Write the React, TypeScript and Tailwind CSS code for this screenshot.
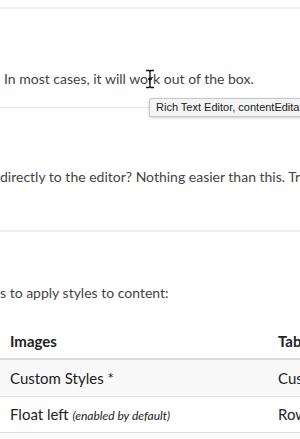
export default function App() {
  const font = { fontFamily: 'Lato, "Noto Sans", sans-serif' };
  return (
    <div className="relative h-[439px] w-[300px] overflow-hidden bg-white text-[#444]" style={font}>
      <div className="h-[7px]" />
      <div className="h-[2px] bg-[#efefef]" />

      <section className="h-[98px] whitespace-nowrap">
        <p className="pt-[58px] pl-[4px] text-[14px] leading-[24px]">
          In most cases, it will work out of the box.
        </p>
      </section>
      <div className="h-px bg-[#e6e6e6]" />

      <section className="h-[122px] whitespace-nowrap">
        <p className="pt-[57px] text-[14px] leading-[24px]">
          directly to the editor? Nothing easier than this. Try it yourself.
        </p>
      </section>
      <div className="h-[2px] bg-[#efefef]" />

      <section className="whitespace-nowrap">
        <p className="pt-[49px] text-[14px] leading-[24px]">s to apply styles to content:</p>
      </section>

      <table className="mt-[19px] w-[420px] table-fixed border-collapse text-left text-[15px] text-[#222]">
        <thead>
          <tr className="h-[35px] border-b-2 border-[#dcdcdc]">
            <th className="w-[270px] pl-[10px] font-bold">Images</th>
            <th className="pl-[8px] font-bold">Tables</th>
          </tr>
        </thead>
        <tbody>
          <tr className="h-[37px] border-b border-[#e0e0e0] bg-[#f9f9f9]">
            <td className="pl-[10px]">Custom Styles *</td>
            <td className="pl-[8px]">Custom Styles</td>
          </tr>
          <tr className="h-[36px] border-b border-[#e0e0e0] bg-white">
            <td className="pl-[10px]">
              Float left <i className="text-[12px]">(enabled by default)</i>
            </td>
            <td className="pl-[8px]">Row</td>
          </tr>
          <tr className="h-[36px] bg-[#f9f9f9]">
            <td className="pl-[10px]" />
            <td />
          </tr>
        </tbody>
      </table>

      {/* text cursor */}
      <svg className="absolute left-[145px] top-[69px]" width="10" height="20" viewBox="0 0 10 20">
        <path d="M1 1.5h3l1 1 1-1h3M5 2.5v15M1 18.5h3l1-1 1 1h3M3 10h4" stroke="#111" strokeWidth="1.3" fill="none" />
      </svg>

      {/* tooltip */}
      <div
        className="absolute left-[149px] top-[98px] h-[19px] w-[170px] rounded-[2px] border border-[#c8c8c8] bg-[#f4f4f4] pl-[6px] text-[11px] leading-[17px] whitespace-nowrap text-[#1a1a1a] shadow-[0_1px_3px_rgba(0,0,0,0.2)]"
        style={{ fontFamily: '"Liberation Sans", Arial, sans-serif' }}
      >
        Rich Text Editor, contentEditable
      </div>
    </div>
  );
}
